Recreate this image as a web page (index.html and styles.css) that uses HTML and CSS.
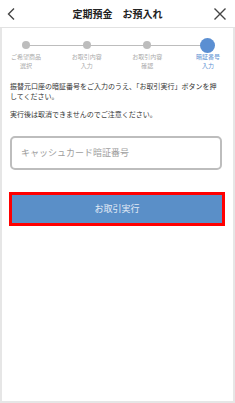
FILE: index.html
```html
<!DOCTYPE html>
<html lang="ja">
<head>
    <meta charset="UTF-8">
    <meta name="viewport" content="width=device-width, initial-scale=1.0">
    <title>定期預金 お預入れ</title>
    <link rel="stylesheet" href="styles.css">
</head>
<body>

    <div class="header">
        <a class="back" href="#">
            <svg width="8" height="12" viewBox="0 0 8 12"><path d="M7 0.5 L1.5 6 L7 11.5" fill="none" stroke="#444" stroke-width="1.4"/></svg>
        </a>
        <div class="title">定期預金　お預入れ</div>
        <a class="close" href="#">
            <svg width="12" height="12" viewBox="0 0 12 12"><path d="M0.5 0.5 L11.5 11.5 M11.5 0.5 L0.5 11.5" fill="none" stroke="#444" stroke-width="1.4"/></svg>
        </a>
    </div>

    <div class="page">
        <div class="steps">
            <div class="step">
                <span class="dot"></span>
                <span class="label">ご希望商品</span>
                <span class="label">選択</span>
            </div>
            <div class="step">
                <span class="dot"></span>
                <span class="label">お取引内容</span>
                <span class="label">入力</span>
            </div>
            <div class="step">
                <span class="dot"></span>
                <span class="label">お取引内容</span>
                <span class="label">確認</span>
            </div>
            <div class="step current">
                <span class="dot"></span>
                <span class="label">暗証番号</span>
                <span class="label">入力</span>
            </div>
        </div>

        <p class="note">振替元口座の暗証番号をご入力のうえ、「お取引実行」ボタンを押してください。</p>
        <p class="note">実行後は取消できませんのでご注意ください。</p>

        <input class="pin" type="password" placeholder="キャッシュカード暗証番号">

        <div class="action">
            <button type="submit">お取引実行</button>
        </div>
    </div>

</body>
</html>
```

FILE: styles.css
```css
body {
    font-family: "Noto Sans CJK JP", "Noto Sans", sans-serif;
    margin: 0;
    padding: 0;
    background-color: #fff;
    color: #333;
    width: 235px;
    height: 403px;
    display: flex;
    flex-direction: column;
}

.header {
    height: 27px;
    display: flex;
    align-items: center;
    justify-content: space-between;
    padding: 0 9px 0 7px;
    border-bottom: 1px solid #e2e2e2;
    flex-shrink: 0;
}

.header a {
    display: flex;
    align-items: center;
}

.header .title {
    font-size: 10px;
    font-weight: bold;
    color: #222;
    margin-left: 6px;
}

.page {
    flex: 1;
    border: 2px solid #e6e6e6;
    border-top: none;
    padding: 0 10px 0 8px;
}

.steps {
    display: flex;
    justify-content: space-between;
    padding: 10px 0 0 0;
    margin: 0 -5px 0 -4px;
    position: relative;
}

.steps::before {
    content: "";
    position: absolute;
    top: 17px;
    left: 20px;
    right: 20px;
    height: 1px;
    background-color: #bdbdbd;
}

.step {
    width: 40px;
    display: flex;
    flex-direction: column;
    align-items: center;
    position: relative;
}

.step .dot {
    width: 8px;
    height: 8px;
    border-radius: 50%;
    background-color: #bdbdbd;
    margin: 3px 0 4px;
}

.step .label {
    font-size: 6px;
    line-height: 8.8px;
    white-space: nowrap;
    color: #aaa;
    text-align: center;
}

.step.current .dot {
    width: 15px;
    height: 15px;
    background-color: #5b8fd2;
    margin: 0;
}

.step.current .label {
    color: #5b8fd2;
}

.note {
    font-size: 7px;
    line-height: 10px;
    margin: 10px 0 0;
    color: #333;
}

.note + .note {
    margin-top: 8px;
}

.pin {
    display: block;
    box-sizing: border-box;
    width: 212px;
    height: 34px;
    margin-top: 17px;
    border: 2px solid #bdbdbd;
    border-radius: 5px;
    padding: 0 9px;
    font-family: inherit;
    font-size: 9px;
}

.pin::placeholder {
    color: #9e9e9e;
}

.action {
    margin-top: 22px;
    margin-left: -1px;
    width: 216px;
    border: 3px solid #f00;
    box-sizing: border-box;
}

.action button {
    display: block;
    width: 100%;
    height: 28px;
    border: none;
    background-color: #5a8fc8;
    color: #e3ebf6;
    font-family: inherit;
    font-size: 9px;
    cursor: pointer;
}
```
